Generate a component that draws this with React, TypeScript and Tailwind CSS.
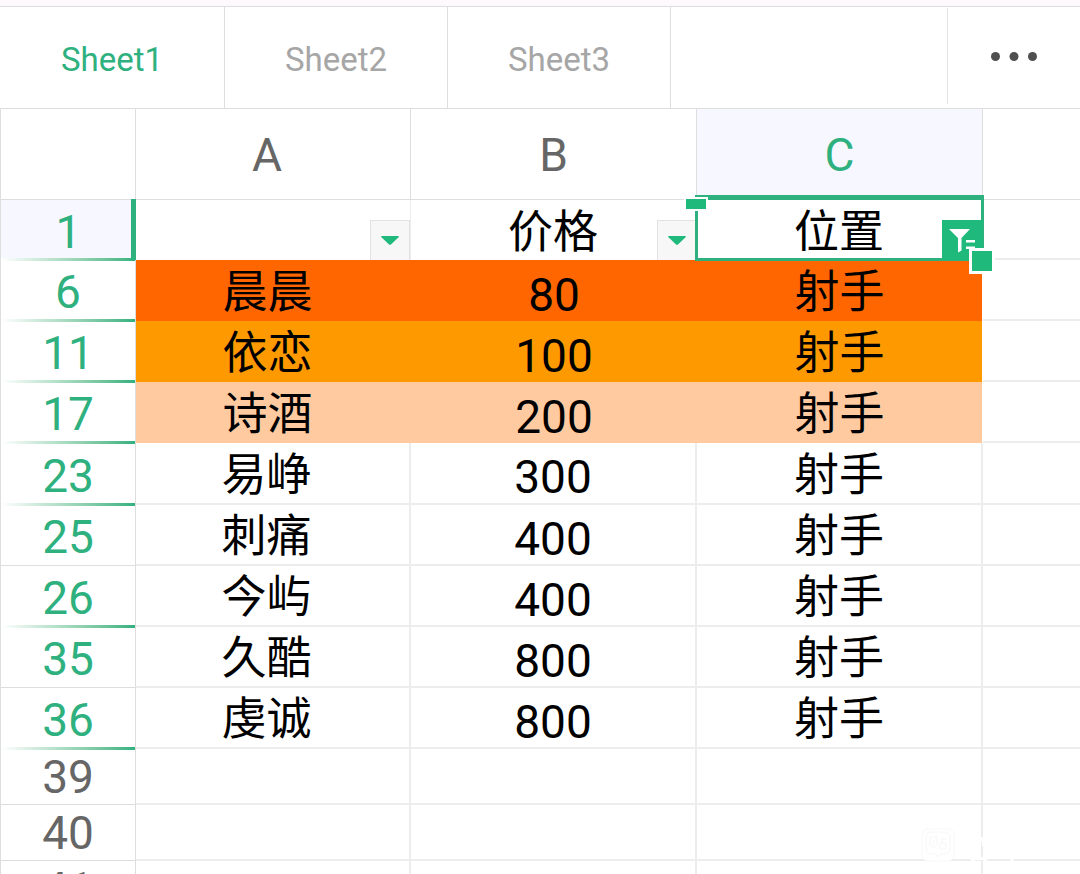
import React, { useState } from 'react';
import clsx from 'clsx';

interface Row {
  id: number;
  name?: string;
  price?: number;
  position?: string;
  fill?: string;
  // rows hidden by the filter sit right after this one
  gap?: boolean;
}

const sheets = ['Sheet1', 'Sheet2', 'Sheet3'];

const rows: Row[] = [
  { id: 6, name: '晨晨', price: 80, position: '射手', fill: 'bg-[#ff6600]', gap: true },
  { id: 11, name: '依恋', price: 100, position: '射手', fill: 'bg-[#ff9900]', gap: true },
  { id: 17, name: '诗酒', price: 200, position: '射手', fill: 'bg-[#ffcaa0]', gap: true },
  { id: 23, name: '易峥', price: 300, position: '射手', gap: true },
  { id: 25, name: '刺痛', price: 400, position: '射手' },
  { id: 26, name: '今屿', price: 400, position: '射手', gap: true },
  { id: 35, name: '久酷', price: 800, position: '射手' },
  { id: 36, name: '虔诚', price: 800, position: '射手', gap: true },
];

const emptyRows = [39, 40, 41];

const GapLine: React.FC = () => (
  <span className="absolute inset-x-0 -bottom-0.5 h-[3px] bg-linear-to-r from-white to-[#2fb17f]"></span>
);

const FilterButton: React.FC<{ label: string }> = ({ label }) => (
  <button
    aria-label={label}
    className="absolute right-0 bottom-0 flex h-10 w-10 items-center justify-center border border-b-0 border-[#e2e2e2] bg-[#f7f7f8]"
  >
    <svg width="18" height="9" viewBox="0 0 18 9">
      <path d="M0.8 0h16.4q1 0.4 0.3 1.2L10 8.4q-1 0.8-2 0L0.5 1.2Q-0.2 0.4 0.8 0z" fill="#1fb97c" />
    </svg>
  </button>
);

const App: React.FC = () => {
  const [active, setActive] = useState('Sheet1');

  return (
    <div className="relative h-screen w-full overflow-hidden bg-white font-['Roboto','Noto_Sans_CJK_SC',sans-serif]">
      <div className="h-[7px] border-b border-[#dedede] bg-[#fdf9fd]"></div>

      <nav className="flex h-[102px] border-b border-[#dedede]">
        {sheets.map((sheet) => (
          <button
            key={sheet}
            onClick={() => setActive(sheet)}
            className={clsx(
              'w-[223px] border-r border-[#dedede] pt-1 text-[33px] first:w-[225px]',
              sheet === active ? 'text-[#2fb17f]' : 'text-[#a6a6a6]'
            )}
          >
            {sheet}
          </button>
        ))}
        <div className="flex-1"></div>
        <button aria-label="More" className="mt-px mb-1 flex w-[133px] items-center justify-center border-l border-[#e4e4e4]">
          <svg width="46" height="9" viewBox="0 0 46 9" fill="#4f4f4f">
            <circle cx="4.5" cy="4.5" r="4.5" />
            <circle cx="23" cy="4.5" r="4.5" />
            <circle cx="41.5" cy="4.5" r="4.5" />
          </svg>
        </button>
      </nav>

      <table className="w-full table-fixed border-separate border-spacing-0 text-center text-[46px] leading-none">
        <colgroup>
          <col className="w-[136px]" />
          <col className="w-[275px]" />
          <col className="w-[286px]" />
          <col className="w-[286px]" />
          <col />
        </colgroup>
        <thead className="text-[#666]">
          <tr className="h-[91px]">
            <th className="border-x border-b border-[#dedede] p-0"></th>
            <th className="border-r border-b border-[#dedede] p-0 pt-0.5 pr-3 font-normal">A</th>
            <th className="border-r border-b border-[#dedede] p-0 pt-0.5 font-normal">B</th>
            <th className="border-r border-b border-[#dedede] bg-[#f6f7ff] p-0 pt-0.5 font-normal text-[#2fb17f]">C</th>
            <th className="border-b border-[#dedede] p-0"></th>
          </tr>
        </thead>
        <tbody>
          <tr className="h-[60px] font-['Noto_Sans_CJK_SC',sans-serif] text-[45px]">
            <th className="relative border-b border-l border-[#dedede] bg-[#f6f7ff] p-0 pt-1 font-['Roboto',sans-serif] text-[46px] font-normal text-[#2fb17f]">
              1
              <GapLine />
              <span className="absolute -top-px right-0 -bottom-0.5 w-[5px] bg-[#2fb17f]"></span>
            </th>
            <td className="relative border-r border-[#ededed] p-0">
              <FilterButton label="Filter A" />
            </td>
            <td className="relative p-0 pr-0.5 pb-1">
              价格
              <FilterButton label="Filter B" />
            </td>
            <td className="relative p-0 pr-0.5 pb-1">
              位置
              <div className="pointer-events-none absolute -top-[5px] -right-px -bottom-px -left-0.5 border-x-[3px] border-t-[5px] border-b-[3px] border-[#2fb17f]"></div>
              <span className="absolute -top-[3px] -left-[13px] h-[14px] w-6 border-2 border-white bg-[#1fb97c]"></span>
              <button aria-label="Filter C" className="absolute right-0 bottom-0 h-10 w-[41px] bg-[#1fb97c]">
                <svg width="41" height="40" viewBox="0 0 41 40" fill="#fff">
                  <path d="M7 9h21l-8.500 9v12.500l-3.500 2v-14.500z" />
                  <path d="M24 20h9v2.500h-9zM24 26.500h9v2.500h-9z" />
                </svg>
              </button>
              <span className="absolute -right-3 -bottom-[14px] z-10 h-[26px] w-[26px] border-[3px] border-white bg-[#1fb97c]"></span>
            </td>
            <td className="border-b-2 border-[#ededed] p-0"></td>
          </tr>

          {rows.map((row) => {
            const cell = row.fill ? row.fill : 'border-r-2 border-b-2 border-[#ededed]';
            return (
              <tr key={row.id} className={clsx('text-black', row.id === 23 ? 'h-[62px]' : 'h-[61px]')}>
                <th className="relative border-x border-b border-[#dedede] p-0 pt-1 font-normal text-[#2fb17f]">
                  {row.id}
                  {row.gap && <GapLine />}
                </th>
                <td className={clsx("p-0 pr-3 pb-1 font-['Noto_Sans_CJK_SC',sans-serif] text-[45px]", cell)}>{row.name}</td>
                <td className={clsx('p-0 pt-2', cell)}>{row.price}</td>
                <td
                  className={clsx(
                    "p-0 pb-1 font-['Noto_Sans_CJK_SC',sans-serif] text-[45px]",
                    cell,
                    row.fill && 'border-r border-white'
                  )}
                >
                  {row.position}
                </td>
                <td className="border-b-2 border-[#ededed] p-0"></td>
              </tr>
            );
          })}

          {emptyRows.map((id) => (
            <tr key={id} className="h-14">
              <th className="border-x border-b border-[#dedede] p-0 font-normal text-[#666]">{id}</th>
              <td className="border-r-2 border-b-2 border-[#ededed] p-0"></td>
              <td className="border-r-2 border-b-2 border-[#ededed] p-0"></td>
              <td className="border-r-2 border-b-2 border-[#ededed] p-0"></td>
              <td className="border-b-2 border-[#ededed] p-0"></td>
            </tr>
          ))}
        </tbody>
      </table>

      {/* faint app badge over the grid */}
      <svg className="absolute right-5 bottom-3 h-[34px] w-[140px]" viewBox="0 0 140 34" fill="none">
        <rect x="2" y="1" width="32" height="32" rx="6" fill="#fff" stroke="#f8f8f8" />
        <path d="M12 4h12q6 0 6 6v10q0 6-6 6h-4l-2 3-2-3h-4q-6 0-6-6V10q0-6 6-6z" stroke="#f6f6f6" />
        <path d="M10 18V9h7v9M13.500 12v5l-3 4M14 18l3 3M22 9v6M22 11h4M20 15h6v6h-6z" stroke="#f6f6f6" />
        <path d="M51 32q8-3 16 0M60 10q5 2 3 8M92 31v4" stroke="#fff" strokeWidth="3" />
      </svg>
    </div>
  );
};

export default App;
